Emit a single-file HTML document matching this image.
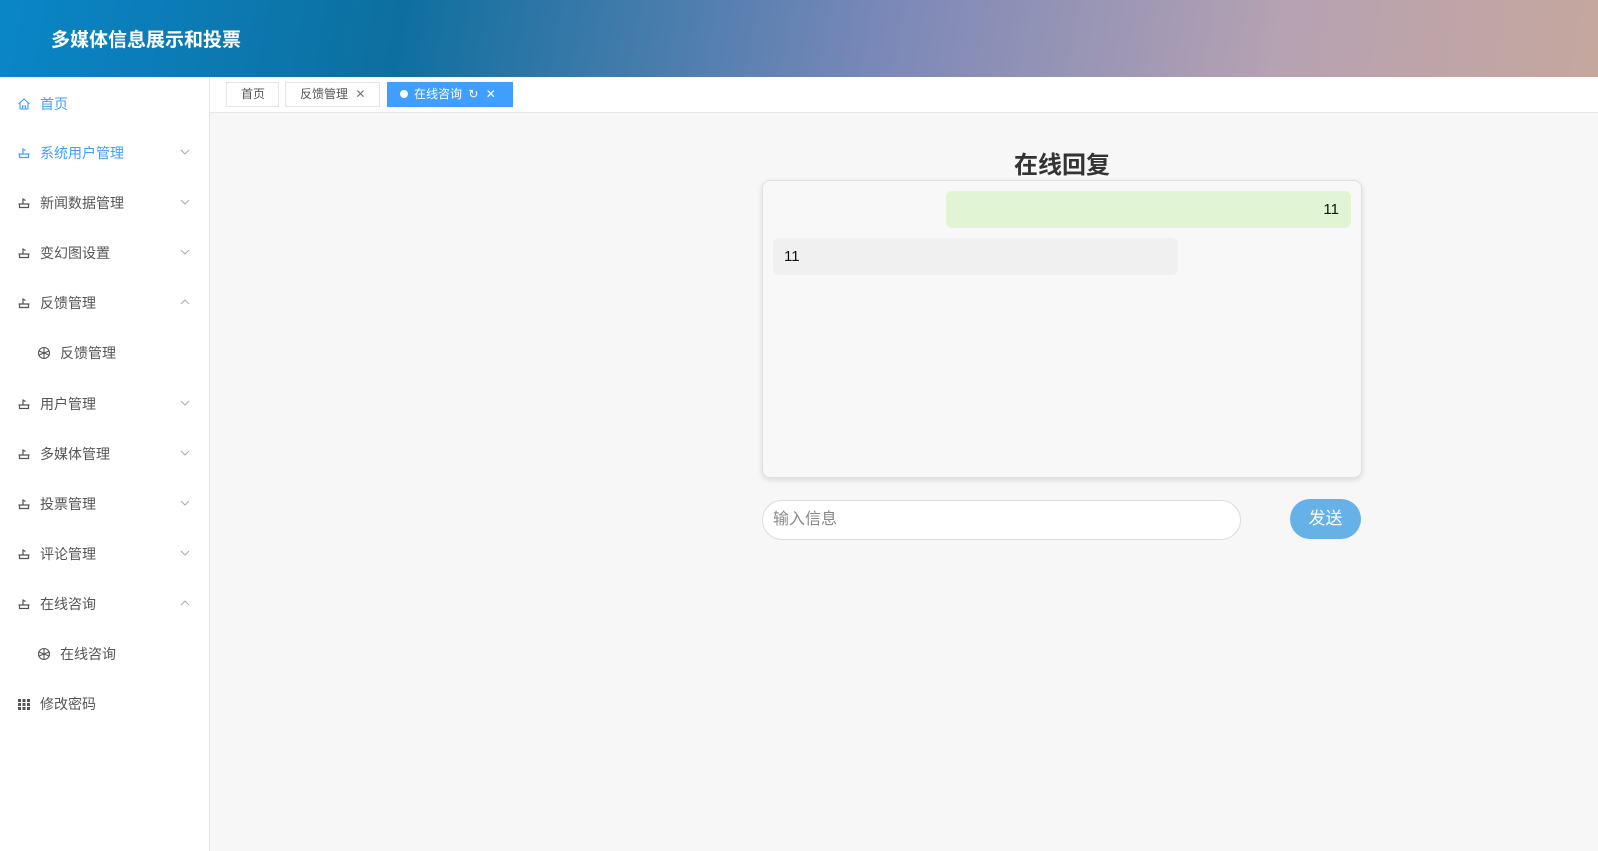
<!DOCTYPE html>
<html><head><meta charset="utf-8"><style>
*{margin:0;padding:0;box-sizing:border-box}
body{width:1598px;height:851px;overflow:hidden;background:#f7f7f7;font-family:"Liberation Sans","Noto Sans CJK SC",sans-serif;position:relative}
.hdr{position:absolute;left:0;top:0;width:1598px;height:77px;background:linear-gradient(100deg,#0a86c8 0%,#0d6f9f 25%,#7a88b8 55%,#b6a2b2 80%,#c6a79e 100%)}
.hdr span{position:absolute;left:51px;top:25px;color:#fff;font-size:19px;font-weight:bold}
.side{position:absolute;left:0;top:77px;width:210px;height:774px;background:#fff;border-right:1px solid #e6e6e6}
.it{position:absolute;left:0;width:210px;height:20px;font-size:14px;color:#555;line-height:20px}
.it .ic{position:absolute;left:17px;top:3px;width:14px;height:14px}
.it .tx{position:absolute;left:40px}
.it.sub .ic{left:37px}.it.sub .tx{left:60px}
.it .ar{position:absolute;left:180px;top:4px;width:10px;height:10px}
.blue{color:#409eff}
.tabs{position:absolute;left:210px;top:77px;width:1388px;height:36px;background:#fff;border-bottom:1px solid #e8e8e8}
.tab{position:absolute;top:5px;height:25px;border:1px solid #e4e4e4;font-size:12px;color:#555;line-height:23px;padding-left:14px;background:#fff}
</style></head><body>
<div class="hdr"><span>多媒体信息展示和投票</span></div>
<div class="side">
<div class="it blue" style="top:17px"><svg class="ic" viewBox="0 0 14 14" fill="none" stroke="#409eff" stroke-width="1.1"><path d="M1.5 7L7 2l5.5 5M3 6v6h8V6M5.5 12V9h3v3"/></svg><span class="tx">首页</span></div>
</div>
<svg width="0" height="0" style="position:absolute"><defs>
<symbol id="bowl" viewBox="0 0 14 14"><path d="M1.5 8h11M2.5 8v3.5h9V8M6 8V3l2.5 1.5" fill="none" stroke="currentColor" stroke-width="1.2"/></symbol>
<symbol id="down" viewBox="0 0 10 10"><path d="M1 3l4 4 4-4" fill="none" stroke="currentColor" stroke-width="1"/></symbol>
<symbol id="up" viewBox="0 0 10 10"><path d="M1 7l4-4 4 4" fill="none" stroke="currentColor" stroke-width="1"/></symbol>
<symbol id="ball" viewBox="0 0 14 14"><g fill="none" stroke="currentColor" stroke-width="1.1"><circle cx="7" cy="7" r="5.5"/><path d="M2 5l10 4M12 5L2 9M7 1.5v11"/></g></symbol>
</defs></svg>
<div style="position:absolute;left:0;top:77px">
<div class="it blue" style="top:66px;color:#409eff"><svg class="ic"><use href="#bowl"/></svg><span class="tx">系统用户管理</span><svg class="ar" style="color:#aaa"><use href="#down"/></svg></div>
<div class="it" style="top:116px"><svg class="ic"><use href="#bowl"/></svg><span class="tx">新闻数据管理</span><svg class="ar" style="color:#aaa"><use href="#down"/></svg></div>
<div class="it" style="top:166px"><svg class="ic"><use href="#bowl"/></svg><span class="tx">变幻图设置</span><svg class="ar" style="color:#aaa"><use href="#down"/></svg></div>
<div class="it" style="top:216px"><svg class="ic"><use href="#bowl"/></svg><span class="tx">反馈管理</span><svg class="ar" style="color:#aaa"><use href="#up"/></svg></div>
<div class="it sub" style="top:266px"><svg class="ic"><use href="#ball"/></svg><span class="tx">反馈管理</span></div>
<div class="it" style="top:317px"><svg class="ic"><use href="#bowl"/></svg><span class="tx">用户管理</span><svg class="ar" style="color:#aaa"><use href="#down"/></svg></div>
<div class="it" style="top:367px"><svg class="ic"><use href="#bowl"/></svg><span class="tx">多媒体管理</span><svg class="ar" style="color:#aaa"><use href="#down"/></svg></div>
<div class="it" style="top:417px"><svg class="ic"><use href="#bowl"/></svg><span class="tx">投票管理</span><svg class="ar" style="color:#aaa"><use href="#down"/></svg></div>
<div class="it" style="top:467px"><svg class="ic"><use href="#bowl"/></svg><span class="tx">评论管理</span><svg class="ar" style="color:#aaa"><use href="#down"/></svg></div>
<div class="it" style="top:517px"><svg class="ic"><use href="#bowl"/></svg><span class="tx">在线咨询</span><svg class="ar" style="color:#aaa"><use href="#up"/></svg></div>
<div class="it sub" style="top:567px"><svg class="ic"><use href="#ball"/></svg><span class="tx">在线咨询</span></div>
<div class="it" style="top:617px"><svg class="ic" viewBox="0 0 14 14" fill="#555"><path d="M1 2h3v3H1zM5.5 2h3v3h-3zM10 2h3v3h-3zM1 6h3v3H1zM5.5 6h3v3h-3zM10 6h3v3h-3zM1 10h3v3H1zM5.5 10h3v3h-3zM10 10h3v3h-3z"/></svg><span class="tx">修改密码</span></div>
</div>
<div class="tabs">
<div class="tab" style="left:16px;width:53px">首页</div>
<div class="tab" style="left:75px;width:95px">反馈管理 <span style="color:#777;margin-left:4px">✕</span></div>
<div class="tab" style="left:177px;width:126px;background:#409eff;border-color:#409eff;color:#fff;padding-left:12px"><span style="display:inline-block;width:8px;height:8px;border-radius:50%;background:#fff;margin-right:6px;vertical-align:0"></span>在线咨询 <span style="margin-left:3px">↻</span> <span style="margin-left:4px">✕</span></div>
</div>
<div style="position:absolute;left:762px;top:145px;width:600px;text-align:center;font-size:24px;font-weight:bold;color:#333">在线回复</div>
<div style="position:absolute;left:762px;top:180px;width:600px;height:298px;background:#f8f8f8;border:1px solid #e0e0e0;border-radius:8px;box-shadow:0 2px 6px rgba(0,0,0,.12)"></div>
<div style="position:absolute;left:946px;top:191px;width:405px;height:37px;background:#e1f5d5;border-radius:6px;font-size:15px;line-height:37px;text-align:right;padding-right:12px;color:#111">11</div>
<div style="position:absolute;left:773px;top:238px;width:405px;height:37px;background:#f0f0f0;border-radius:6px;font-size:15px;line-height:37px;padding-left:11px;color:#111">11</div>
<div style="position:absolute;left:762px;top:500px;width:479px;height:40px;background:#fff;border:1px solid #dcdcdc;border-radius:20px;font-size:16px;line-height:38px;padding-left:10px;color:#888">输入信息</div>
<div style="position:absolute;left:1290px;top:499px;width:71px;height:40px;background:#66b1e8;border-radius:20px;font-size:17px;line-height:40px;text-align:center;color:#fff">发送</div>
</body></html>
